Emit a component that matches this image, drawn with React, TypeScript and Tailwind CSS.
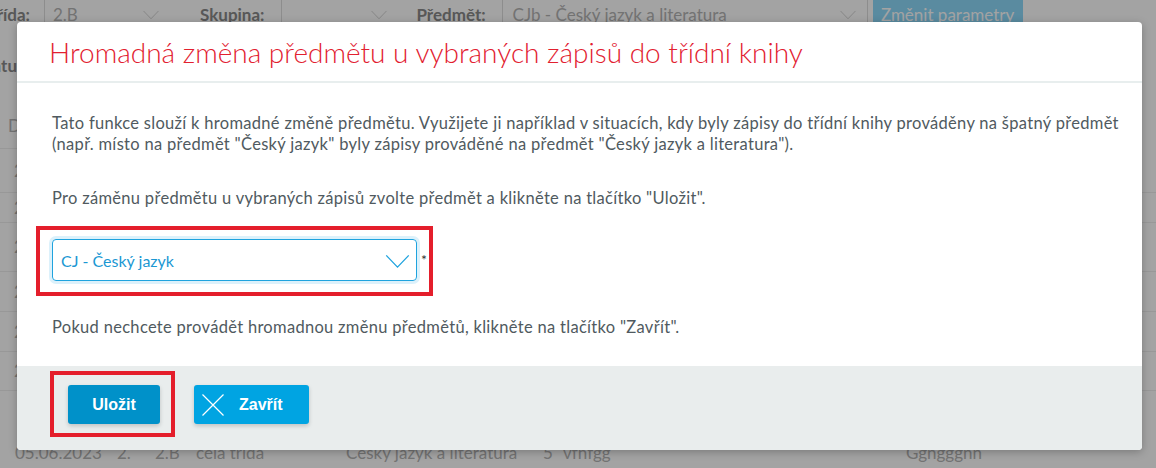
const rows = ['h-[44px]', 'h-[30px]', 'h-[49px]', 'h-[40px]', 'h-[40px]', 'h-[39px]'];

function Chevron({ className }: { className?: string }) {
    return (
        <svg viewBox="0 0 26 16" className={className} fill="none" stroke="currentColor" strokeWidth="1.4">
            <path d="M1 1.5 L13 14 L25 1.5" />
        </svg>
    );
}

/** Dimmed page behind the dialog */
function Backdrop() {
    return (
        <div className="flex h-full flex-col text-[17px] text-[#b4b4b4]">
            <div className="flex h-[30px] items-center">
                <div className="flex w-[44px] justify-end overflow-hidden whitespace-nowrap pr-[14px] font-bold text-[#8a8a8a]">Třída:</div>
                <div className="flex h-[34px] w-[140px] items-center justify-between border-l border-[#ddd] pl-[8px] pr-[22px]">
                    <span>2.B</span>
                    <Chevron className="h-[10px] w-[22px] text-[#ccc]" />
                </div>
                <span className="ml-[16px] font-bold text-[#8a8a8a]">Skupina:</span>
                <div className="ml-[17px] flex h-[34px] w-[135px] items-center justify-end border-l border-[#ddd] pr-[25px]">
                    <Chevron className="h-[10px] w-[24px] text-[#ccc]" />
                </div>
                <span className="font-bold text-[#8a8a8a]">Předmět:</span>
                <div className="ml-[16px] flex h-[34px] w-[366px] items-center justify-between border-x border-[#ddd] pl-[10px] pr-[7px]">
                    <span>CJb - Český jazyk a literatura</span>
                    <Chevron className="h-[10px] w-[24px] text-[#ccc]" />
                </div>
                <div className="ml-[5px] flex h-[34px] w-[150px] items-center justify-center bg-[#8dd9fa] text-white">
                    Změnit parametry
                </div>
            </div>
            <div className="mt-[23px] flex w-[17px] justify-end overflow-hidden whitespace-nowrap font-bold text-[#8a8a8a]">Obsah dokumentu</div>
            <div className="mt-[34px] w-[17px] overflow-hidden border-b border-[#eee] pb-[10px] pl-[8px]">Datum</div>
            {rows.map((h, i) => (
                <div key={i} className={`${h} flex items-center border-b border-[#eee] pl-[14px]`}>
                    2
                </div>
            ))}
            <div className="mt-auto flex h-[26px] items-center whitespace-nowrap pb-[4px]">
                <span className="w-[117px] pl-[15px]">05.06.2023</span>
                <span className="w-[38px]">2.</span>
                <span className="w-[41px]">2.B</span>
                <span className="w-[150px]">celá třída</span>
                <span className="w-[197px]">Český jazyk a literatura</span>
                <span className="w-[20px]">5</span>
                <span className="w-[343px]">vfhfgg</span>
                <span>Ggngggnn</span>
            </div>
        </div>
    );
}

export default function App() {
    return (
        <div className="relative h-[468px] w-[1156px] overflow-hidden bg-white font-['Lato','Open_Sans',sans-serif]">
            <Backdrop />
            <div className="absolute inset-0 bg-black/[0.36]" />

            <div className="absolute left-[17px] top-[22px] flex w-[1125px] flex-col overflow-hidden rounded-[4px] bg-white shadow-[0_2px_8px_rgba(0,0,0,0.25)]">
                <div className="flex h-[61px] items-center border-b-2 border-[#e8eeee] pl-[32px]">
                    <h2 className="text-[28px] font-light leading-none text-[#e2202f]">
                        Hromadná změna předmětu u vybraných zápisů do třídní knihy
                    </h2>
                </div>

                <div className="flex flex-col pl-[35px] pt-[30px] pb-[28px] text-[16.5px] leading-[21px] tracking-[0.3px] text-[#505a60]">
                    <p>
                        Tato funkce slouží k hromadné změně předmětu. Využijete ji například v situacích, kdy byly zápisy do třídní knihy prováděny na špatný předmět
                        <br />
                        (např. místo na předmět "Český jazyk" byly zápisy prováděné na předmět "Český jazyk a literatura").
                    </p>
                    <p className="mt-[33px]">
                        Pro záměnu předmětu u vybraných zápisů zvolte předmět a klikněte na tlačítko "Uložit".
                    </p>

                    <div className="-ml-[16px] mt-[17px] flex h-[70px] w-[397px] items-start border-4 border-[#e41e2b] pl-[12px] pt-[9px]">
                        <div className="flex h-[42px] w-[365px] items-center justify-between rounded-[4px] border border-[#1fa3de] pl-[8px] pr-[6px] shadow-[0_0_0_3px_#dcf1fb]">
                            <span className="text-[16px] tracking-normal text-[#1b98d3]">CJ - Český jazyk</span>
                            <Chevron className="mt-[3px] h-[15px] w-[25px] text-[#1fa3de]" />
                        </div>
                        <span className="ml-[4px] mt-[14px] text-[14px] leading-none text-[#333]">*</span>
                    </div>

                    <p className="mt-[21px]">
                        Pokud nechcete provádět hromadnou změnu předmětů, klikněte na tlačítko "Zavřít".
                    </p>
                </div>

                <div className="flex h-[84px] items-start bg-[#e9eded] pl-[33px] pt-[5px] font-['Liberation_Sans',Arial,sans-serif]">
                    <div className="flex h-[66px] w-[125px] border-4 border-[#e41e2b] pl-[14px] pt-[10px]">
                        <button className="h-[39px] w-[92px] rounded-[3px] bg-[#0091c9] text-[16px] font-bold text-white shadow-[0_2px_4px_rgba(0,0,0,0.18)]">
                            Uložit
                        </button>
                    </div>
                    <button className="ml-[19px] mt-[14px] flex h-[39px] w-[115px] items-center rounded-[3px] bg-[#00a4e2] pl-[8px] text-[16px] font-bold text-white shadow-[0_2px_4px_rgba(0,0,0,0.18)]">
                        <svg viewBox="0 0 22 22" className="h-[22px] w-[22px]" fill="none" stroke="currentColor" strokeWidth="1.2">
                            <path d="M0.5 0.5 L21.5 21.5 M21.5 0.5 L0.5 21.5" />
                        </svg>
                        <span className="ml-[15px]">Zavřít</span>
                    </button>
                </div>
            </div>
        </div>
    );
}
